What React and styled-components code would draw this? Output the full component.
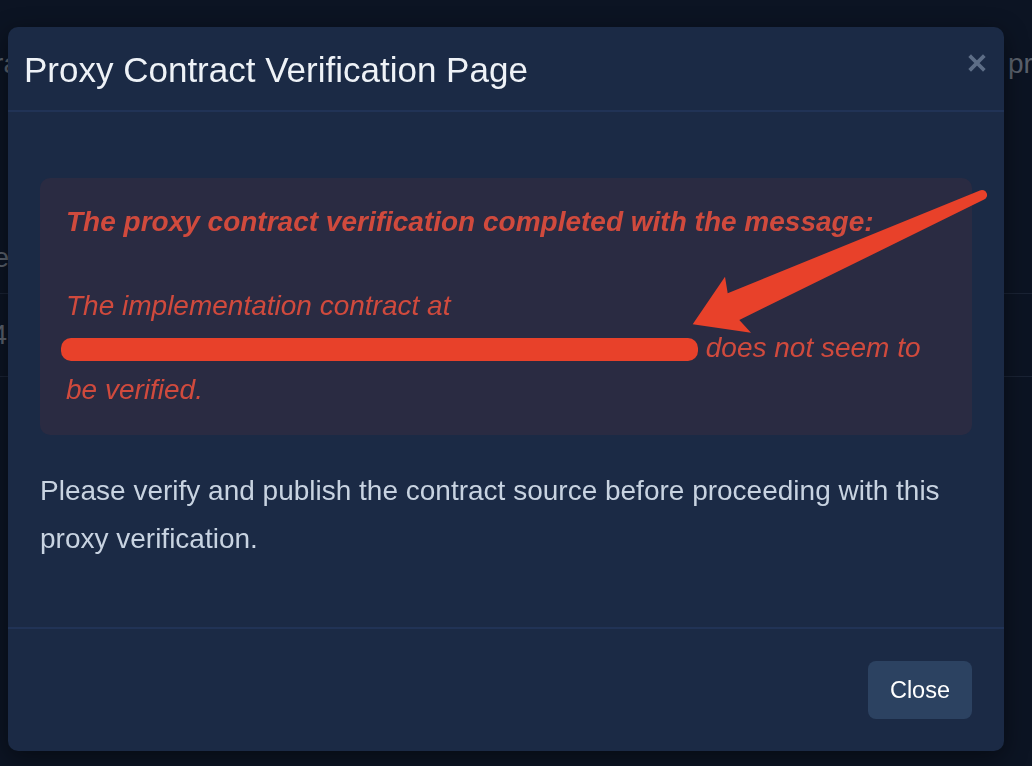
import React from "react";
import styled, { createGlobalStyle } from "styled-components";

const GlobalStyle = createGlobalStyle`
  html, body { margin: 0; padding: 0; }
  body {
    background: #0c1423;
    font-family: "Liberation Sans", Arial, Helvetica, sans-serif;
    overflow: hidden;
  }
`;

/* ---------- background page (behind the backdrop) ---------- */
const Page = styled.div`
  height: 766px;
  background: #0c1423;
  padding-top: 42px;
  box-sizing: border-box;
  color: #5a616c;
  font-size: 28px;
`;

const BgRow = styled.div`
  display: flex;
  justify-content: space-between;
  align-items: center;
  height: ${(p) => p.$h}px;
  border-bottom: ${(p) => (p.$line ? "1px solid #1a2334" : "none")};
  box-sizing: border-box;
`;

const LeftClip = styled.div`
  width: ${(p) => p.$w}px;
  overflow: hidden;
  display: flex;
  justify-content: flex-end;
  white-space: nowrap;
`;

const RightClip = styled.div`
  width: 24px;
  overflow: hidden;
  white-space: nowrap;
`;

const Spacer = styled.div`
  height: ${(p) => p.$h}px;
`;

/* ---------- modal ---------- */
const Overlay = styled.div`
  position: fixed;
  inset: 0;
  padding: 27px 28px 0 8px;
  box-sizing: border-box;
`;

const Modal = styled.div`
  background: #1b2a45;
  border-radius: 10px;
  box-shadow: 0 6px 24px rgba(0, 0, 0, 0.45);
  overflow: hidden;
`;

const Header = styled.div`
  display: flex;
  justify-content: space-between;
  align-items: center;
  height: 83px;
  padding: 0 17px 0 16px;
  border-bottom: 2px solid #213356;
`;

const Title = styled.h5`
  margin: 0;
  font-size: 35px;
  font-weight: 400;
  color: #eef2f7;
  line-height: 1.2;
  padding-top: 3px;
`;

const CloseX = styled.button`
  border: 0;
  background: none;
  padding: 0;
  margin-top: -12px;
  width: 20px;
  height: 20px;
  display: flex;
  align-items: center;
  justify-content: center;
  cursor: pointer;
`;

const Body = styled.div`
  padding: 66px 32px 64px 32px;
`;

const Alert = styled.div`
  background: #2a2b42;
  border-radius: 10px;
  padding: 23px 26px 24px 26px;
  color: #d04a3d;
  font-size: 28px;
  line-height: 42px;
  font-style: italic;
`;

const AlertTitle = styled.strong`
  font-weight: 700;
`;

const Redacted = styled.span`
  display: inline-block;
  width: 637px;
  height: 23px;
  margin-left: -5px;
  border-radius: 10px;
  background: #e8412a;
  vertical-align: -4px;
`;

const Paragraph = styled.p`
  margin: 32px 0 0 0;
  color: #c8d3e1;
  font-size: 28px;
  line-height: 48px;
`;

const Footer = styled.div`
  display: flex;
  justify-content: flex-end;
  padding: 32px;
  border-top: 2px solid #213356;
`;

const Button = styled.button`
  height: 58px;
  padding: 0 22px;
  border: 0;
  border-radius: 8px;
  background: #2c4261;
  color: #ffffff;
  font-family: "Liberation Sans", Arial, sans-serif;
  font-size: 23.5px;
  cursor: pointer;
`;

const Annotation = styled.svg`
  position: fixed;
  left: 0;
  top: 0;
  width: 1032px;
  height: 766px;
  pointer-events: none;
`;

export default function App() {
  return (
    <>
      <GlobalStyle />
      <Page>
        <BgRow $h={44}>
          <LeftClip $w={19}>Contra</LeftClip>
          <RightClip>proxy</RightClip>
        </BgRow>
        <Spacer $h={136} />
        <BgRow $h={72} $line>
          <LeftClip $w={9}>Name</LeftClip>
        </BgRow>
        <BgRow $h={83} $line>
          <LeftClip $w={7}>1234</LeftClip>
        </BgRow>
      </Page>

      <Overlay>
        <Modal>
          <Header>
            <Title>Proxy Contract Verification Page</Title>
            <CloseX aria-label="Close">
              <svg width="18" height="18" viewBox="0 0 18 18">
                <path
                  d="M3 3 L15 15 M15 3 L3 15"
                  stroke="#5d6d86"
                  strokeWidth="3.8"
                  strokeLinecap="square"
                />
              </svg>
            </CloseX>
          </Header>
          <Body>
            <Alert>
              <AlertTitle>
                The proxy contract verification completed with the message:
              </AlertTitle>
              <br />
              <br />
              The implementation contract at <Redacted /> does not seem to be
              verified.
            </Alert>
            <Paragraph>
              Please verify and publish the contract source before proceeding
              with this proxy verification.
            </Paragraph>
          </Body>
          <Footer>
            <Button>Close</Button>
          </Footer>
        </Modal>
      </Overlay>

      <Annotation viewBox="0 0 1032 766">
        <path
          d="M979.9 190.4 L727.7 293.3 L725 276.7 L692.7 324.3 L751 332.7 L739.3 320 L984.1 199.6 A5 5 0 0 0 979.9 190.4 Z"
          fill="#e8412a"
        />
      </Annotation>
    </>
  );
}
